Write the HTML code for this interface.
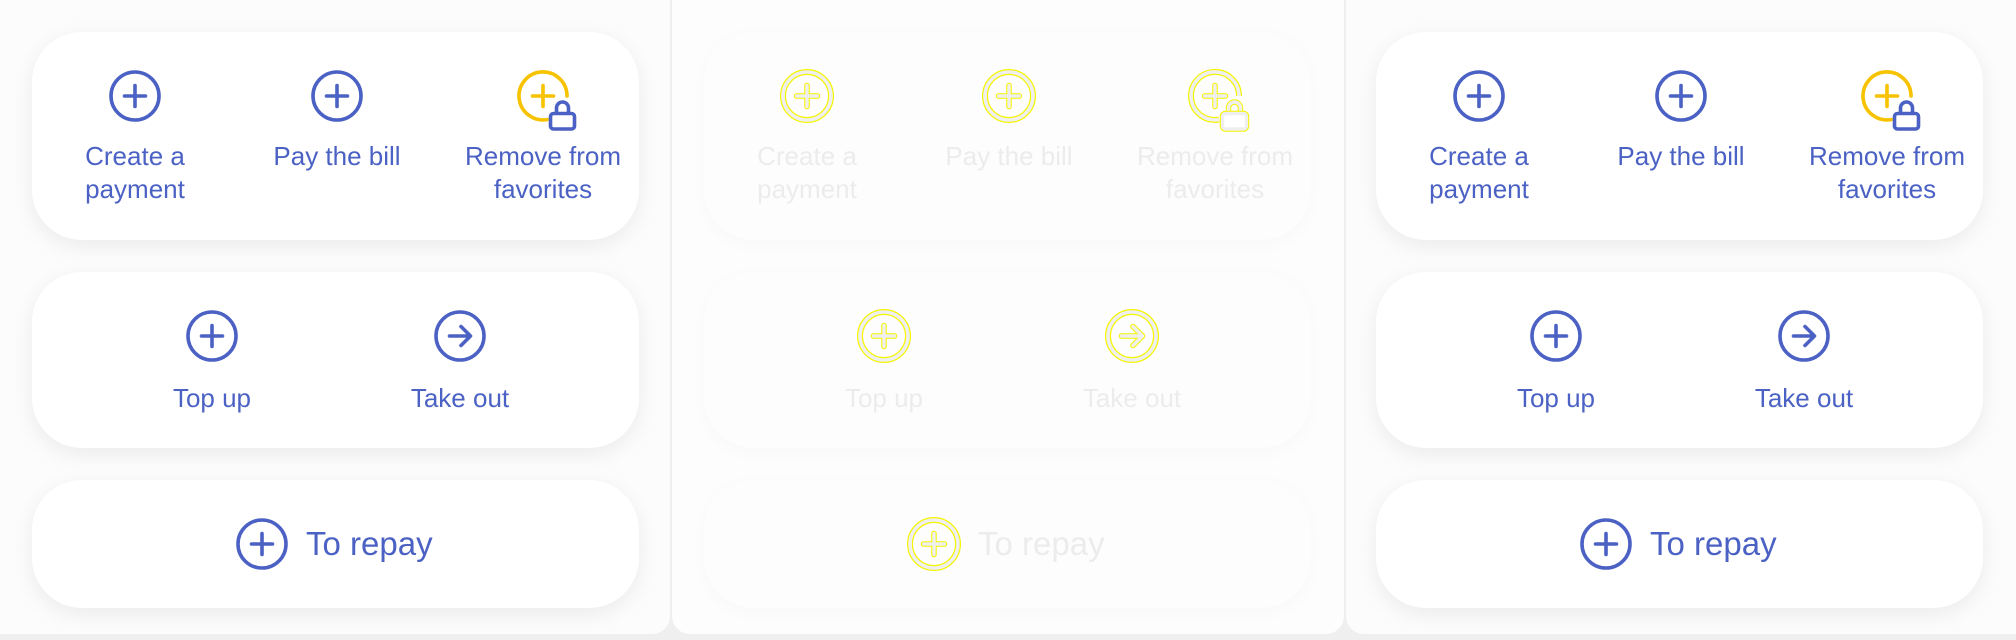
<!DOCTYPE html>
<html><head><meta charset="utf-8"><style>
*{margin:0;padding:0;box-sizing:border-box}
body{width:2016px;height:640px;background:#efefef;font-family:"Liberation Sans",sans-serif;position:relative;overflow:hidden}
.panel{position:absolute;top:-20px;height:654px;width:672px;background:#fcfcfc;border-radius:18px}
.card{position:absolute;left:32px;width:607px;background:#fff;border-radius:50px;box-shadow:0 6px 22px rgba(0,0,0,.07)}
.c1{top:32px;height:208px}.c2{top:272px;height:176px}.c3{top:480px;height:128px}
.item{position:absolute;text-align:center;font-size:26px;line-height:33px;color:#4b62c4}
.item svg{display:block;margin:0 auto}
.mid .card{background:#fdfdfd;box-shadow:0 4px 18px rgba(0,0,0,.025)}
.mid .item{color:#ececec}
</style></head><body>
<svg width="0" height="0" style="position:absolute">
<defs>
<g id="plus"><circle cx="30" cy="30" r="24" fill="none" stroke="#4b62c4" stroke-width="3.6"/><path d="M30 19.5V40.5M19.5 30H40.5" stroke="#4b62c4" stroke-width="3.6" stroke-linecap="round"/></g>
<g id="arrow"><circle cx="30" cy="30" r="24" fill="none" stroke="#4b62c4" stroke-width="3.6"/><path d="M19.5 30H40M31 20.5L40.5 30L31 39.5" fill="none" stroke="#4b62c4" stroke-width="3.6" stroke-linecap="round" stroke-linejoin="round"/></g>
<g id="fav"><path d="M34 53.6A24 24 0 1 1 54 30" fill="none" stroke="#f7c200" stroke-width="3.6" stroke-linecap="round"/><path d="M30 19.5V40.5M19.5 30H40.5" stroke="#f7c200" stroke-width="3.6" stroke-linecap="round"/><path d="M43.5 48V42a6 6 0 0 1 12 0v6" fill="none" stroke="#4b62c4" stroke-width="3.6"/><rect x="37.5" y="47.5" width="24" height="15.5" rx="3" fill="#fff" stroke="#4b62c4" stroke-width="3.6"/></g>
<g id="mplus"><circle cx="30" cy="30" r="24" fill="none" stroke="#f5f500" stroke-width="6"/><circle cx="30" cy="30" r="24" fill="none" stroke="#efefef" stroke-width="3.6"/><path d="M30 19.5V40.5M19.5 30H40.5" stroke="#f5f500" stroke-width="5.5" stroke-linecap="round"/><path d="M30 19.5V40.5M19.5 30H40.5" stroke="#efefef" stroke-width="3.4" stroke-linecap="round"/></g>
<g id="marrow"><circle cx="30" cy="30" r="24" fill="none" stroke="#f5f500" stroke-width="6"/><circle cx="30" cy="30" r="24" fill="none" stroke="#efefef" stroke-width="3.6"/><path d="M19.5 30H40M31 20.5L40.5 30L31 39.5" fill="none" stroke="#f5f500" stroke-width="5.5" stroke-linecap="round" stroke-linejoin="round"/><path d="M19.5 30H40M31 20.5L40.5 30L31 39.5" fill="none" stroke="#efefef" stroke-width="3.4" stroke-linecap="round" stroke-linejoin="round"/></g>
<g id="mfav"><path d="M34 53.6A24 24 0 1 1 54 30" fill="none" stroke="#f5f500" stroke-width="6"/><path d="M34 53.6A24 24 0 1 1 54 30" fill="none" stroke="#efefef" stroke-width="3.6"/><path d="M30 19.5V40.5M19.5 30H40.5" stroke="#f5f500" stroke-width="5.5" stroke-linecap="round"/><path d="M30 19.5V40.5M19.5 30H40.5" stroke="#efefef" stroke-width="3.4" stroke-linecap="round"/><path d="M43.5 48V42a6 6 0 0 1 12 0v6" fill="none" stroke="#f5f500" stroke-width="5.5"/><path d="M43.5 48V42a6 6 0 0 1 12 0v6" fill="none" stroke="#efefef" stroke-width="3.4"/><rect x="37.5" y="47.5" width="24" height="15.5" rx="3" fill="#fff" stroke="#f5f500" stroke-width="5.5"/><rect x="37.5" y="47.5" width="24" height="15.5" rx="3" fill="#fff" stroke="#efefef" stroke-width="3.4"/></g>
</defs></svg>

<div class="panel" style="left:-20px;width:690px"></div>
<div class="panel" style="left:672px;width:672px;background:#fdfdfd"></div>
<div class="panel" style="left:1346px;width:692px"></div>

<div style="position:absolute;left:0;top:0;width:672px;height:640px">
 <div class="card c1">
  <div class="item" style="left:2px;width:202px;top:34px"><svg width="60" height="66" viewBox="0 0 60 66"><use href="#plus"/></svg><div style="margin-top:8px">Create a<br>payment</div></div>
  <div class="item" style="left:204px;width:202px;top:34px"><svg width="60" height="66" viewBox="0 0 60 66"><use href="#plus"/></svg><div style="margin-top:8px">Pay the bill</div></div>
  <div class="item" style="left:396px;width:230px;top:34px"><svg width="60" height="66" viewBox="0 0 60 66" style="overflow:visible"><use href="#fav"/></svg><div style="margin-top:8px">Remove from<br>favorites</div></div>
 </div>
 <div class="card c2">
  <div class="item" style="left:56px;width:248px;top:34px"><svg width="60" height="60" viewBox="0 0 60 60"><use href="#plus"/></svg><div style="margin-top:16px">Top up</div></div>
  <div class="item" style="left:304px;width:248px;top:34px"><svg width="60" height="60" viewBox="0 0 60 60"><use href="#arrow"/></svg><div style="margin-top:16px">Take out</div></div>
 </div>
 <div class="card c3">
  <svg style="position:absolute;left:200px;top:34px" width="60" height="60" viewBox="0 0 60 60"><use href="#plus"/></svg>
  <div class="item" style="left:274px;top:44px;font-size:33px;line-height:40px;text-align:left">To repay</div>
 </div>
</div>

<div class="mid" style="position:absolute;left:672px;top:0;width:672px;height:640px">
 <div class="card c1">
  <div class="item" style="left:2px;width:202px;top:34px"><svg width="60" height="66" viewBox="0 0 60 66"><use href="#mplus"/></svg><div style="margin-top:8px">Create a<br>payment</div></div>
  <div class="item" style="left:204px;width:202px;top:34px"><svg width="60" height="66" viewBox="0 0 60 66"><use href="#mplus"/></svg><div style="margin-top:8px">Pay the bill</div></div>
  <div class="item" style="left:396px;width:230px;top:34px"><svg width="60" height="66" viewBox="0 0 60 66" style="overflow:visible"><use href="#mfav"/></svg><div style="margin-top:8px">Remove from<br>favorites</div></div>
 </div>
 <div class="card c2">
  <div class="item" style="left:56px;width:248px;top:34px"><svg width="60" height="60" viewBox="0 0 60 60"><use href="#mplus"/></svg><div style="margin-top:16px">Top up</div></div>
  <div class="item" style="left:304px;width:248px;top:34px"><svg width="60" height="60" viewBox="0 0 60 60"><use href="#marrow"/></svg><div style="margin-top:16px">Take out</div></div>
 </div>
 <div class="card c3">
  <svg style="position:absolute;left:200px;top:34px" width="60" height="60" viewBox="0 0 60 60"><use href="#mplus"/></svg>
  <div class="item" style="left:274px;top:44px;font-size:33px;line-height:40px;text-align:left">To repay</div>
 </div>
</div>

<div style="position:absolute;left:1344px;top:0;width:672px;height:640px">
 <div class="card c1">
  <div class="item" style="left:2px;width:202px;top:34px"><svg width="60" height="66" viewBox="0 0 60 66"><use href="#plus"/></svg><div style="margin-top:8px">Create a<br>payment</div></div>
  <div class="item" style="left:204px;width:202px;top:34px"><svg width="60" height="66" viewBox="0 0 60 66"><use href="#plus"/></svg><div style="margin-top:8px">Pay the bill</div></div>
  <div class="item" style="left:396px;width:230px;top:34px"><svg width="60" height="66" viewBox="0 0 60 66" style="overflow:visible"><use href="#fav"/></svg><div style="margin-top:8px">Remove from<br>favorites</div></div>
 </div>
 <div class="card c2">
  <div class="item" style="left:56px;width:248px;top:34px"><svg width="60" height="60" viewBox="0 0 60 60"><use href="#plus"/></svg><div style="margin-top:16px">Top up</div></div>
  <div class="item" style="left:304px;width:248px;top:34px"><svg width="60" height="60" viewBox="0 0 60 60"><use href="#arrow"/></svg><div style="margin-top:16px">Take out</div></div>
 </div>
 <div class="card c3">
  <svg style="position:absolute;left:200px;top:34px" width="60" height="60" viewBox="0 0 60 60"><use href="#plus"/></svg>
  <div class="item" style="left:274px;top:44px;font-size:33px;line-height:40px;text-align:left">To repay</div>
 </div>
</div>
</body></html>
